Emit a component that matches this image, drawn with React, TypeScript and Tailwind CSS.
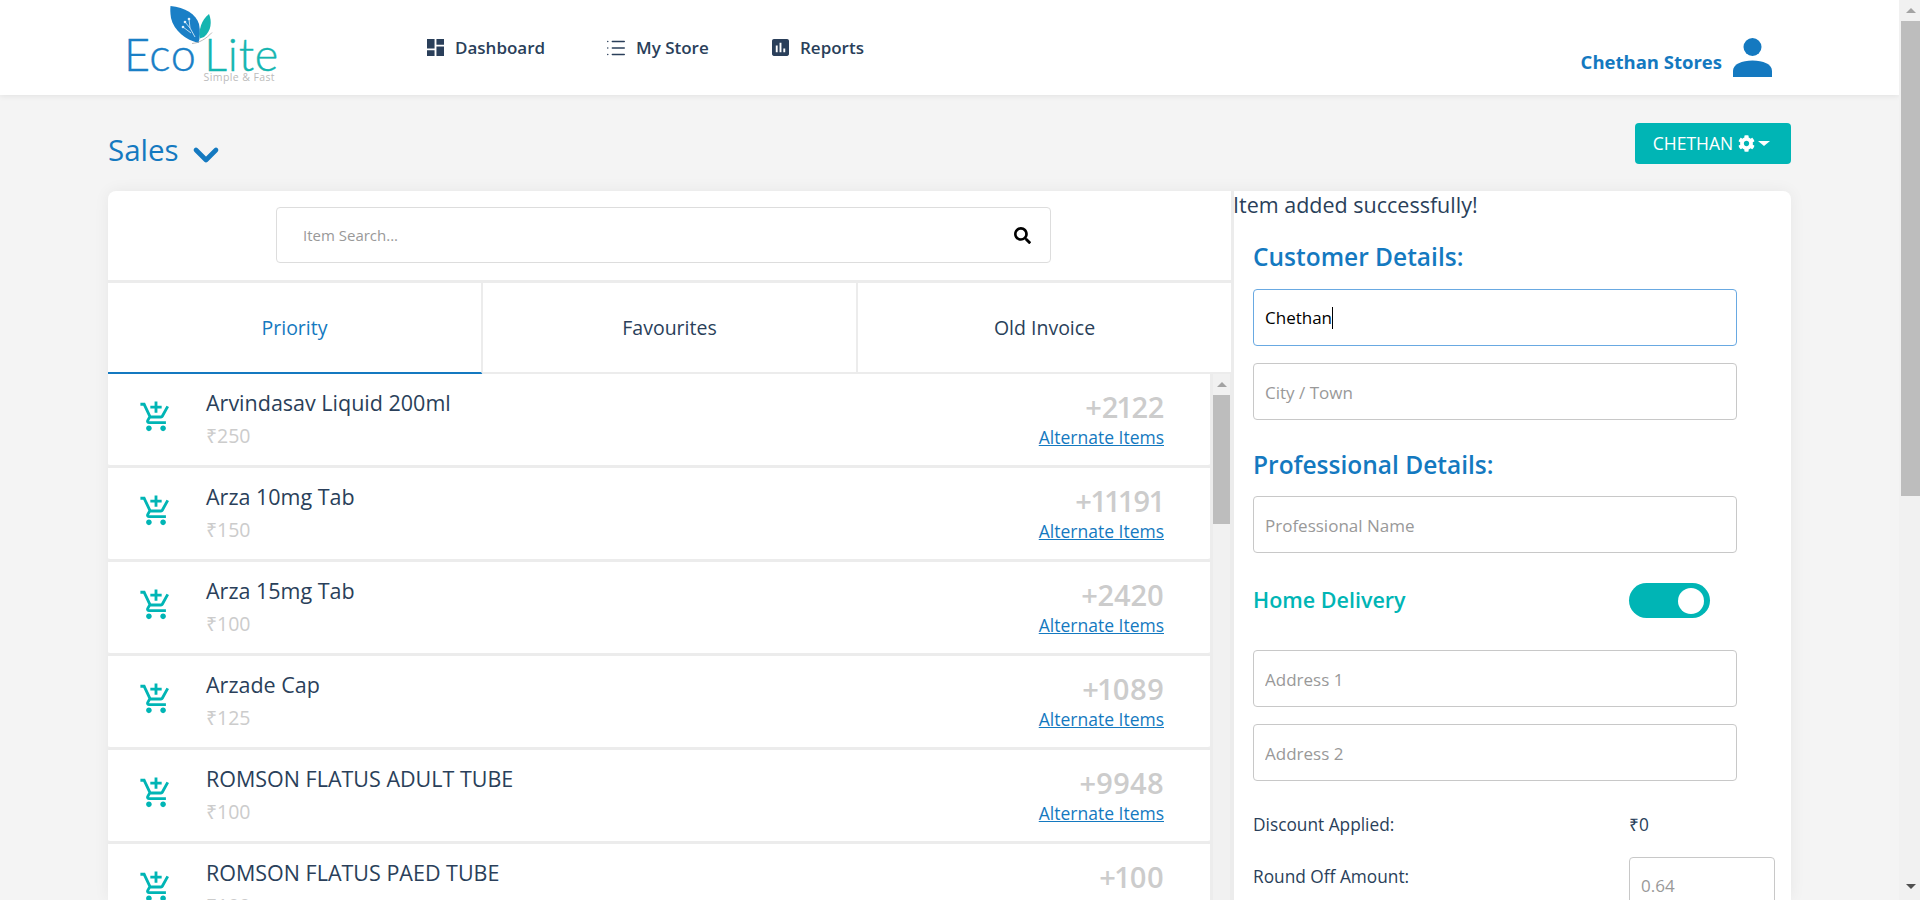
import { ChevronDown, List } from "lucide-react";
import { FaCog, FaSearch } from "react-icons/fa";
import { MdAddShoppingCart } from "react-icons/md";

const ITEMS = [
  { name: "Arvindasav Liquid 200ml", price: "250", stock: "+2122" },
  { name: "Arza 10mg Tab", price: "150", stock: "+11191" },
  { name: "Arza 15mg Tab", price: "100", stock: "+2420" },
  { name: "Arzade Cap", price: "125", stock: "+1089" },
  { name: "ROMSON FLATUS ADULT TUBE", price: "100", stock: "+9948" },
  { name: "ROMSON FLATUS PAED TUBE", price: "100", stock: "+100" },
];

function Logo() {
  return (
    <div className="relative h-[95px] w-[151px] shrink-0 -translate-x-[1px]">
      <svg viewBox="165 0 55 50" className="absolute left-[40px] top-0 h-[50px] w-[55px]">
        <path d="M171.500 6C186 7.500 197 14 200 24C201.500 31 201 38 199.500 43C187 40 175 31 172 18C171.200 13 171.200 9 171.500 6Z" fill="#1a7fc6" />
        <path d="M210 14C213 21 212.500 31 205 37L200.800 38.500C199.800 30 202 20 210 14Z" fill="#14b5b0" />
        <path d="M193 43.500C200 43 207 39 213 32.500" stroke="#a9a9a9" strokeWidth="0.8" fill="none" />
        <path d="M186 22L191 28L196 37M190 19L191 28M184 27L192 33" stroke="#cfe4f5" strokeWidth="0.9" fill="none" />
        <circle cx="186" cy="22" r="1.300" fill="#e3f0fa" />
        <circle cx="190" cy="19" r="1.300" fill="#e3f0fa" />
        <circle cx="184" cy="27" r="1.300" fill="#e3f0fa" />
      </svg>
      <div className="absolute left-0 top-[27px] flex font-['Lato',sans-serif] text-[45px] font-light leading-[54px] [-webkit-text-stroke:0.4px]">
        <span className="mr-[8px] tracking-[0.5px] text-[#1a7fc6]">Eco</span>
        <span className="tracking-[0.8px] text-[#14b5b0]">Lite</span>
      </div>
      <span className="absolute right-0 top-[71px] text-[10.500px] leading-[12px] tracking-[0.4px] text-[#bbbbbb]">
        Simple &amp; Fast
      </span>
    </div>
  );
}

function NavLink({ icon, label, width }: { icon: React.ReactNode; label: string; width: string }) {
  return (
    <a className={`flex items-center gap-[11px] text-[17px] font-semibold text-[#2a3f5a] ${width}`}>
      {icon}
      {label}
    </a>
  );
}

function Header() {
  return (
    <header className="flex h-[95px] items-center bg-white pl-[125px] pr-[127px] shadow-[0_1px_6px_rgba(0,0,0,0.08)]">
      <Logo />
      <nav className="ml-[151px] flex items-center">
        <NavLink
          width="w-[180px]"
          label="Dashboard"
          icon={
            <svg viewBox="3 3 18 18" className="h-[17px] w-[17px] fill-[#2a3f5a]">
              <path d="M3 13h8V3H3v10zm0 8h8v-6H3v6zm10 0h8V11h-8v10zm0-18v6h8V3h-8z" />
            </svg>
          }
        />
        <NavLink
          width="w-[165px]"
          label="My Store"
          icon={<List size={22} strokeWidth={1.6} className="-mx-[2px] text-[#2a3f5a]" />}
        />
        <NavLink
          width="w-[100px]"
          label="Reports"
          icon={
            <svg viewBox="3 3 18 18" className="h-[17px] w-[17px] fill-[#2a3f5a]">
              <path d="M19 3H5c-1.100 0-2 .9-2 2v14c0 1.100.9 2 2 2h14c1.100 0 2-.9 2-2V5c0-1.100-.9-2-2-2zM9 17H7v-7h2v7zm4 0h-2V7h2v10zm4 0h-2v-4h2v4z" />
            </svg>
          }
        />
      </nav>
      <div className="ml-auto flex items-end gap-[11px] self-start pt-[38px]">
        <span className="pb-[1px] text-[18.500px] font-bold leading-[28px] text-[#1479c0]">Chethan Stores</span>
        <svg viewBox="0 0 39 39" className="h-[39px] w-[39px] fill-[#1479c0]">
          <circle cx="19.500" cy="9" r="9" />
          <path d="M0 39V33C0 26 9 22.500 19.500 22.500S39 26 39 33V39Z" />
        </svg>
      </div>
    </header>
  );
}

function ItemRow({ item }: { item: (typeof ITEMS)[number] }) {
  return (
    <div className="flex h-[94px] shrink-0 items-start rounded-b-[4px] border-b-[3px] border-[#ececec] bg-white pl-[31px] pr-[46px]">
      <MdAddShoppingCart size={34} className="mt-[26px] shrink-0 text-[#00b5b5]" />
      <div className="ml-[33px] flex-1 pt-[14px]">
        <p className="text-[21.500px] font-medium leading-[30px] text-[#2a3f5a]">{item.name}</p>
        <p className="mt-[4px] text-[19.500px] leading-[27px] text-[#cccccc]">₹{item.price}</p>
      </div>
      <div className="flex flex-col items-end pt-[13px]">
        <span className="text-[29px] font-semibold leading-[40px] text-[#cccccc] proportional-nums">{item.stock}</span>
        <a className="-mt-[2px] text-[17.500px] leading-[25px] text-[#1479c0] underline">Alternate Items</a>
      </div>
    </div>
  );
}

function ListScrollbar() {
  return (
    <div className="ml-[3px] flex w-[17px] shrink-0 flex-col bg-[#f1f1f1]">
      <div className="flex h-[21px] items-center justify-center">
        <div className="h-0 w-0 border-x-[5px] border-b-[5px] border-x-transparent border-b-[#a3a3a3]" />
      </div>
      <div className="h-[129px] bg-[#bdbdbd]" />
    </div>
  );
}

function ItemsPanel() {
  const tabs = ["Priority", "Favourites", "Old Invoice"];
  return (
    <section className="flex h-full w-[1123px] shrink-0 flex-col">
      <div className="flex h-[92px] shrink-0 justify-center border-b-[3px] border-[#ececec] pr-[12px] pt-[16px]">
        <div className="flex h-[56px] w-[775px] items-center justify-between rounded-[4px] border border-[#dddddd] pl-[26px] pr-[19px]">
          <input placeholder="Item Search..." className="flex-1 pt-[1px] text-[15px] outline-none placeholder:text-[#999999]" />
          <FaSearch size={17} className="text-black" />
        </div>
      </div>
      <div className="flex h-[92px] shrink-0">
        {tabs.map((tab, i) => (
          <div
            key={tab}
            className={`flex flex-1 items-center justify-center border-b-[3px] pt-[1px] text-[19.500px] font-medium ${
              i === 0 ? "border-b-[#1479c0] text-[#1479c0]" : "border-b-[#ececec] text-[#2a3f5a]"
            } ${i < 2 ? "border-r-[2px] border-r-[#ececec]" : ""}`}
          >
            {tab}
          </div>
        ))}
      </div>
      <div className="-mt-[1px] flex min-h-0 flex-1 overflow-hidden bg-[#ececec]">
        <div className="flex flex-1 flex-col">
          {ITEMS.map((item) => (
            <ItemRow key={item.name} item={item} />
          ))}
        </div>
        <ListScrollbar />
        <div className="w-[1px]" />
      </div>
    </section>
  );
}

function TextField({ placeholder, className = "" }: { placeholder: string; className?: string }) {
  return (
    <input
      placeholder={placeholder}
      className={`block h-[57px] w-[484px] rounded-[4px] border border-[#c8c8c8] px-[11px] pt-[1px] text-[17px] outline-none placeholder:text-[#999999] ${className}`}
    />
  );
}

function DetailsPanel() {
  return (
    <section className="min-w-0 flex-1 border-l-[3px] border-[#ececec]">
      <p className="pt-[1px] text-[21.500px] font-medium leading-[26px] -ml-[1px] text-[#2a3f5a]">Item added successfully!</p>
      <div className="pl-[19px]">
        <h2 className="mt-[22px] text-[24.500px] font-semibold leading-[34px] text-[#1479c0]">Customer Details:</h2>
        <div className="mt-[15px] flex h-[57px] w-[484px] items-center rounded-[4px] border border-[#69a9e2] px-[11px] text-[17px] text-black">
          Chethan
          <span className="h-[22px] w-[1px] bg-black" />
        </div>
        <TextField placeholder="City / Town" className="mt-[17px]" />
        <h2 className="mt-[28px] text-[24.500px] font-semibold leading-[34px] text-[#1479c0]">Professional Details:</h2>
        <TextField placeholder="Professional Name" className="mt-[14px]" />
        <div className="mt-[30px] flex h-[35px] w-[457px] items-center justify-between">
          <span className="text-[21.500px] font-semibold text-[#00b5b5]">Home Delivery</span>
          <div className="flex h-[35px] w-[81px] items-center justify-end rounded-full bg-[#00b5b5] pr-[6px]">
            <div className="h-[26px] w-[26px] rounded-full bg-white" />
          </div>
        </div>
        <TextField placeholder="Address 1" className="mt-[32px]" />
        <TextField placeholder="Address 2" className="mt-[17px]" />
        <div className="mt-[33px] flex h-[22px] items-center text-[17.300px] font-medium text-[#2a3f5a]">
          <span className="w-[376px]">Discount Applied:</span>
          <span className="font-normal">₹0</span>
        </div>
        <div className="mt-[21px] flex items-start text-[17.300px] font-medium text-[#2a3f5a]">
          <span className="w-[376px] pt-[7px]">Round Off Amount:</span>
          <input
            placeholder="0.64"
            className="h-[57px] w-[146px] rounded-[4px] border border-[#c8c8c8] px-[11px] text-[17px] font-normal outline-none placeholder:text-[#999999]"
          />
        </div>
      </div>
    </section>
  );
}

function PageScrollbar() {
  return (
    <aside className="flex h-full w-[21px] shrink-0 flex-col bg-[#f1f1f1] pl-[2px]">
      <div className="flex h-[21px] items-center justify-center">
        <div className="h-0 w-0 border-x-[5px] border-b-[5px] border-x-transparent border-b-[#a3a3a3]" />
      </div>
      <div className="h-[475px] bg-[#bdbdbd]" />
      <div className="mt-auto flex h-[16px] items-start justify-center">
        <div className="h-0 w-0 border-x-[5px] border-t-[5px] border-x-transparent border-t-[#505050]" />
      </div>
    </aside>
  );
}

export default function App() {
  return (
    <div className="flex h-[900px] w-full overflow-hidden font-['Open_Sans',sans-serif]">
      <main className="flex min-w-0 flex-1 flex-col bg-[#f4f4f4]">
        <Header />
        <div className="flex h-[96px] shrink-0 items-start justify-between px-[108px] pt-[28px]">
          <div className="flex items-center gap-[15px]">
            <h1 className="text-[29.500px] font-medium leading-[54px] text-[#1479c0]">Sales</h1>
            <ChevronDown size={40} strokeWidth={2.8} className="mt-[9px] -ml-[8px] text-[#1479c0]" />
          </div>
          <button className="flex h-[41px] w-[156px] items-center justify-center rounded-[4px] bg-[#00b5b5] pr-[3px] text-[17.500px] text-white">
            CHETHAN
            <FaCog size={17} className="ml-[5px]" />
            <span className="ml-[3px] h-0 w-0 border-x-[6px] border-t-[5px] border-x-transparent border-t-white" />
          </button>
        </div>
        <div className="mx-[108px] flex min-h-0 flex-1 rounded-t-[8px] bg-white shadow-[0_0_16px_rgba(0,0,0,0.06)]">
          <ItemsPanel />
          <DetailsPanel />
        </div>
      </main>
      <PageScrollbar />
    </div>
  );
}
